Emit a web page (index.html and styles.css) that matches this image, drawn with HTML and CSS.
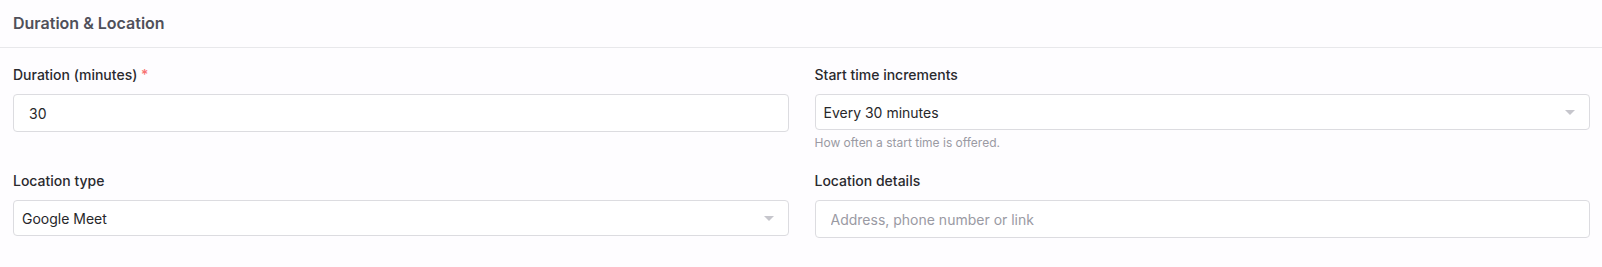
FILE: index.html
```html
<!DOCTYPE html>
<html lang="en">
<head>
  <meta charset="UTF-8">
  <meta name="viewport" content="width=device-width, initial-scale=1.0">
  <title>Duration &amp; Location</title>
  <link rel="stylesheet" href="styles.css">
</head>
<body>
  <section class="card">
    <div class="card-header">Duration &amp; Location</div>

    <div class="card-body">
      <!-- 1행 -->
      <div class="field">
        <label class="label" for="duration">Duration (minutes) <span class="req">*</span></label>
        <input class="input" id="duration" type="number" value="30">
      </div>
      <div class="field">
        <label class="label" for="increment">Start time increments</label>
        <div class="select-wrap">
          <select class="select" id="increment">
            <option>Every 30 minutes</option>
            <option>Every 15 minutes</option>
            <option>Every 60 minutes</option>
          </select>
          <span class="caret"></span>
        </div>
        <p class="help">How often a start time is offered.</p>
      </div>

      <!-- 2행 -->
      <div class="field">
        <label class="label" for="loctype">Location type</label>
        <div class="select-wrap">
          <select class="select" id="loctype">
            <option>Google Meet</option>
            <option>Zoom</option>
            <option>Phone call</option>
            <option>In person</option>
          </select>
          <span class="caret"></span>
        </div>
      </div>
      <div class="field">
        <label class="label" for="locdetails">Location details</label>
        <input class="input" id="locdetails" type="text" placeholder="Address, phone number or link">
      </div>
    </div>
  </section>
</body>
</html>
```

FILE: styles.css
```css
* { box-sizing: border-box; margin: 0; padding: 0; }

body {
  font-family: Inter, 'Noto Sans', sans-serif;
  background: #fefdff;
  color: #27272a;
}

.card {
  background: #fefdff;
}

.card-header {
  height: 48px;
  padding: 12px 13px 0;
  border-bottom: 1px solid #e8e8eb;
  font-size: 16px;
  font-weight: 600;
  line-height: 22px;
  color: #50505a;
}

.card-body {
  display: grid;
  grid-template-columns: 1fr 1fr;
  column-gap: 26px;
  row-gap: 20px;
  padding: 17px 12px 0 13px;
}

.field {
  display: flex;
  flex-direction: column;
}

.label {
  font-size: 14px;
  font-weight: 500;
  line-height: 20px;
  color: #2a2a2e;
  margin-bottom: 9px;
}

.req { color: #f87171; }

.input {
  height: 38px;
  padding: 0 15px;
  border: 1px solid #dcdce0;
  border-radius: 4px;
  background: #fff;
  font-family: inherit;
  font-size: 14px;
  color: #27272a;
  outline: none;
}

.input::placeholder { color: #9a9aa3; }

.input[type=number] { -moz-appearance: textfield; }
.input::-webkit-outer-spin-button,
.input::-webkit-inner-spin-button { -webkit-appearance: none; margin: 0; }

.select-wrap { position: relative; }

.select {
  width: 100%;
  height: 36px;
  padding: 0 30px 0 8px;
  border: 1px solid #dcdce0;
  border-radius: 4px;
  background: #fff;
  font-family: inherit;
  font-size: 14px;
  color: #27272a;
  appearance: none;
  -webkit-appearance: none;
  outline: none;
}

.caret {
  position: absolute;
  right: 15px;
  top: 16px;
  width: 0;
  height: 0;
  border-left: 5px solid transparent;
  border-right: 5px solid transparent;
  border-top: 5px solid #c6c6cc;
  pointer-events: none;
}

.help {
  margin-top: 5px;
  font-size: 12px;
  line-height: 16px;
  color: #9a9aa3;
}
```
